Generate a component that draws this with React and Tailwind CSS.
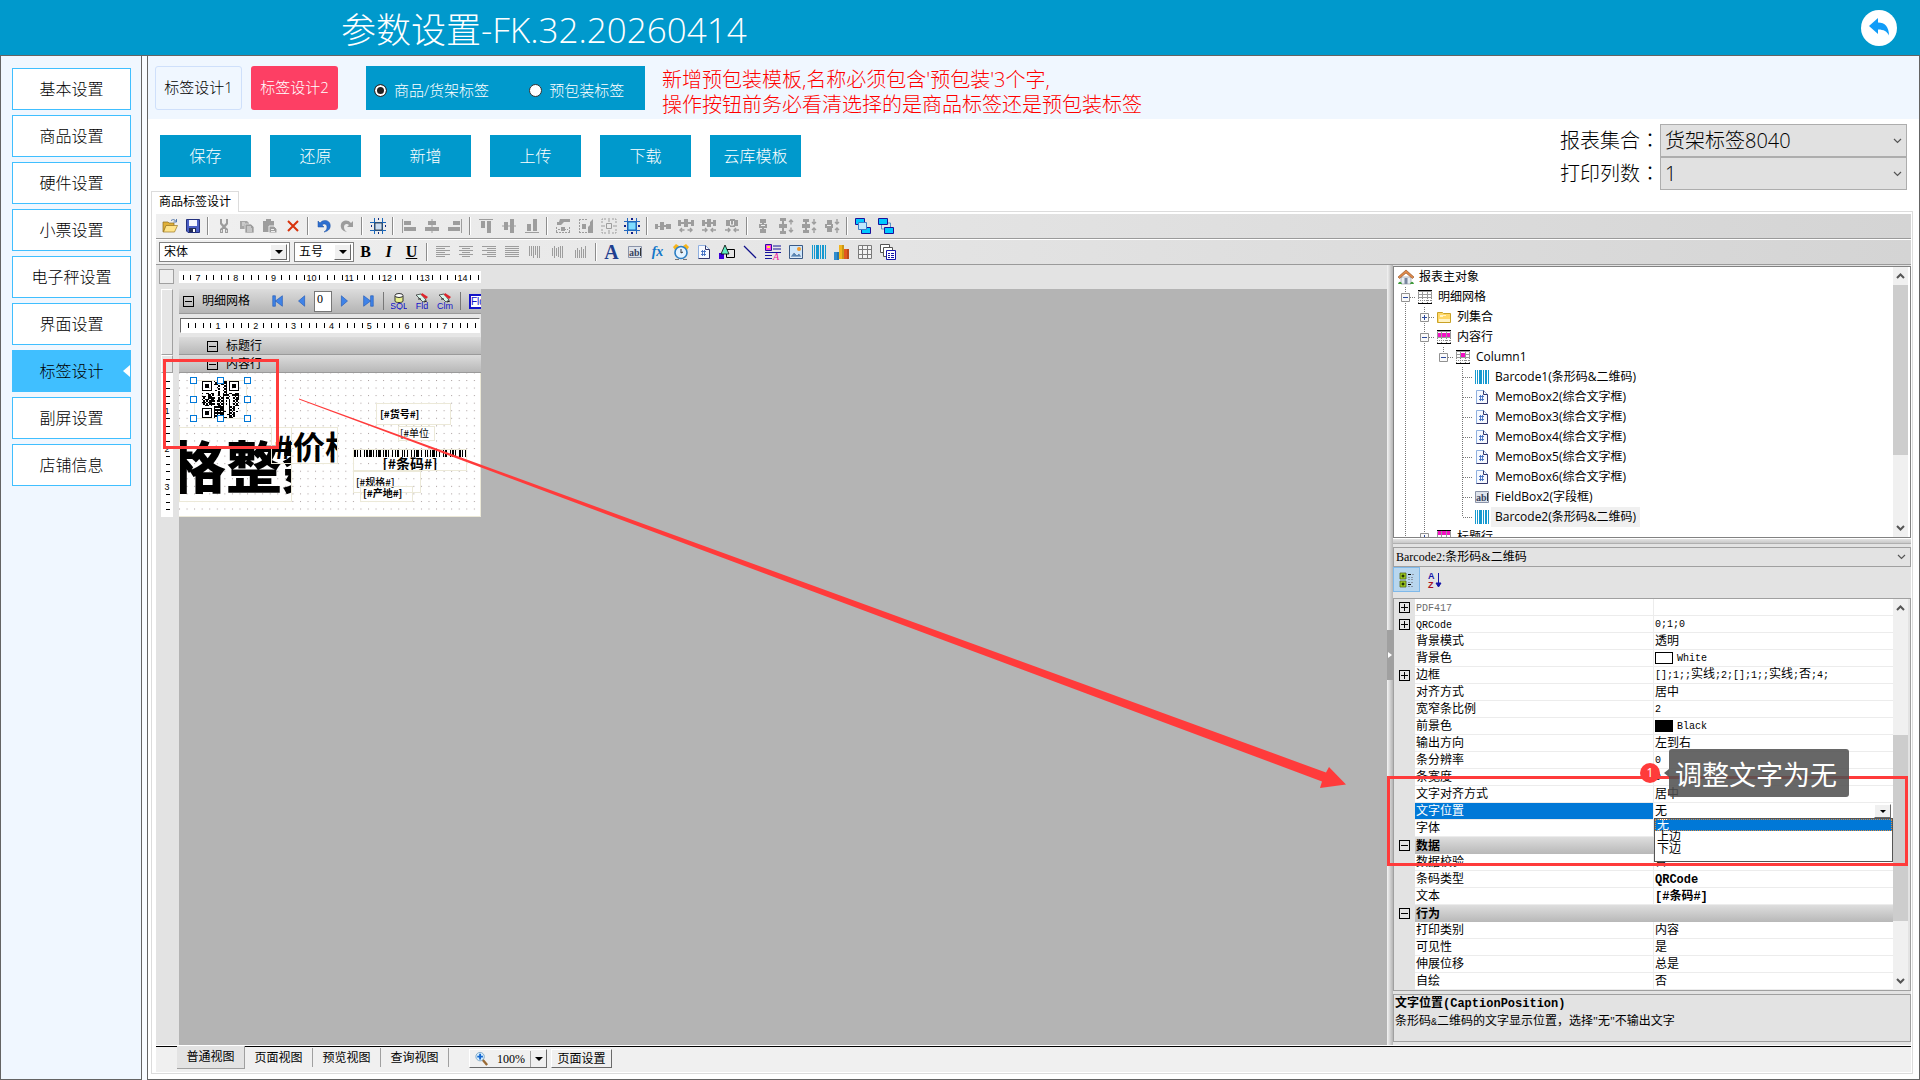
import clsx from "clsx";

const GRAY = "#9d9d9d";

/* ---------- data ---------- */

const menu = ["基本设置", "商品设置", "硬件设置", "小票设置", "电子秤设置", "界面设置", "标签设计", "副屏设置", "店铺信息"];
const actions = ["保存", "还原", "新增", "上传", "下载", "云库模板"];

const toolbarTop = [
  ["open", "save"],
  ["cut", "copy", "paste", "remove"],
  ["undo", "redo"],
  ["frame"],
  ["alignLeft", "alignCenter", "alignRight"],
  ["alignTop", "alignMiddle", "alignBottom"],
  ["sameWidth", "sameHeight", "sameSize", "fitGrid"],
  ["hEqual", "hMore", "hLess", "hNone"],
  ["vEqual", "vMore", "vLess", "vNone"],
  ["front", "back"]
];

const toolbarText = [
  ["bold", "italic", "underline"],
  ["textLeft", "textCenter", "textRight", "textJustify", "vTop", "vMiddle", "vBottom"],
  ["label", "field", "fx", "clock", "memo", "shape", "line", "rich", "picture", "barcode", "chart", "table", "sub"]
];

const tree = [
  { cells: [], icon: "home", text: "报表主对象" },
  { cells: ["minus"], icon: "grid", text: "明细网格" },
  { cells: ["v", "plus"], icon: "folder", text: "列集合" },
  { cells: ["v", "minus"], icon: "gridRow", text: "内容行" },
  { cells: ["v", "v", "minusLast"], icon: "gridCell", text: "Column1" },
  { cells: ["v", "v", "none", "tee"], icon: "barcode", text: "Barcode1(条形码&二维码)" },
  { cells: ["v", "v", "none", "tee"], icon: "memo", text: "MemoBox2(综合文字框)" },
  { cells: ["v", "v", "none", "tee"], icon: "memo", text: "MemoBox3(综合文字框)" },
  { cells: ["v", "v", "none", "tee"], icon: "memo", text: "MemoBox4(综合文字框)" },
  { cells: ["v", "v", "none", "tee"], icon: "memo", text: "MemoBox5(综合文字框)" },
  { cells: ["v", "v", "none", "tee"], icon: "memo", text: "MemoBox6(综合文字框)" },
  { cells: ["v", "v", "none", "tee"], icon: "field", text: "FieldBox2(字段框)" },
  { cells: ["v", "v", "none", "ell"], icon: "barcode", text: "Barcode2(条形码&二维码)", active: true },
  { cells: ["v", "plus"], icon: "gridHead", text: "标题行" }
];

const properties = [
  { name: "PDF417", value: "", expand: true, muted: true },
  { name: "QRCode", value: "0;1;0", expand: true },
  { name: "背景模式", value: "透明" },
  { name: "背景色", value: "White", swatch: "bg-white" },
  { name: "边框", value: "[];1;;实线;2;[];1;;实线;否;4;", expand: true },
  { name: "对齐方式", value: "居中" },
  { name: "宽窄条比例", value: "2" },
  { name: "前景色", value: "Black", swatch: "bg-black" },
  { name: "输出方向", value: "左到右" },
  { name: "条分辨率", value: "0" },
  { name: "条宽度", value: "0" },
  { name: "文字对齐方式", value: "居中" },
  { name: "文字位置", value: "无", options: ["无", "上边", "下边"] },
  { name: "字体", value: "" },
  { group: "数据" },
  { name: "数据校验", value: "否" },
  { name: "条码类型", value: "QRCode", strong: true },
  { name: "文本", value: "[#条码#]", strong: true },
  { group: "行为" },
  { name: "打印类别", value: "内容" },
  { name: "可见性", value: "是" },
  { name: "伸展位移", value: "总是" },
  { name: "自绘", value: "否" }
];

/* ---------- icons ---------- */

const textLines = (rows) => rows.map(([x, w], i) => <rect key={i} x={x} y={2 + i * 2} width={w} height="1" fill={GRAY} />);
const bars = (rows) => rows.map(([y, h], i) => <rect key={i} x={2 + i * 2} y={y} width="1" height={h} fill={GRAY} />);

const gridBase = (
  <>
    <path d="M1 1h14v14H1z" fill="#fff" />
    <path d="M1.500 8V2.500h13V8M1.500 5.500h13M5.500 2v6M10.500 2v6M1 8.500h14" stroke="#9a9a9a" fill="none" />
    <path d="M1 1.500h14M1 14.500h14" stroke="#000" />
    <path d="M1.500 9v5M14.500 9v5M5.500 9v5M10.500 9v5M1 11.500h14" stroke="#888" strokeDasharray="1 1" fill="none" />
  </>
);

const arrowsH = (inward) =>
  inward ? <path d="M1 12h5M10 12h5M4 10l2 2-2 2M12 10l-2 2 2 2" stroke={GRAY} fill="none" strokeWidth="1.4" />
    : <path d="M1.500 12h5M9.500 12h5M4 10l-2 2 2 2M12 10l2 2-2 2" stroke={GRAY} fill="none" strokeWidth="1.4" />;

const arrowsV = (inward) =>
  inward ? <path d="M13 1v5M13 10v5M11 4l2 2 2-2M11 12l2-2 2 2" stroke={GRAY} fill="none" strokeWidth="1.4" />
    : <path d="M13 1.500v5M13 9.500v5M11 4l2-2 2 2M11 12l2 2 2-2" stroke={GRAY} fill="none" strokeWidth="1.4" />;

const icons = {
  open: (
    <>
      <path d="M1 4h5l1 1h5v3H4l-2.500 6H1z" fill="#e0b038" stroke="#8a6a1c" strokeWidth=".7" />
      <path d="M4 7.500h11.500L12.500 14H1.500z" fill="#ffe48a" stroke="#9a7620" strokeWidth=".7" />
      <path d="M9 2.500c2-1.500 4-1 5 1M14.500 1v3h-3" fill="none" stroke="#5577aa" />
    </>
  ),
  save: (
    <>
      <path d="M1.500 1.500h13v13H3l-1.500-1.500z" fill="#4b5fc4" stroke="#23307e" />
      <path d="M4 2h8v6H4z" fill="#f4f6ff" />
      <path d="M4 10h7v4H4z" fill="#222b55" />
      <path d="M8 11h2v3H8z" fill="#fff" />
    </>
  ),
  cut: (
    <>
      <path d="M4 1h2v4l2 2 2-2V1h2v5l-2.500 3L12 11v4H9v-4H7v4H4v-4l2.500-2L4 6z" fill={GRAY} />
      <path d="M5.500 12v2M10.500 12v2" stroke="#ededed" strokeWidth=".8" />
    </>
  ),
  copy: (
    <>
      <path d="M1 3h7l2 2v6H1z" fill="#a6a6a6" />
      <path d="M6 6h6l3 3v6H6z" fill={GRAY} stroke="#ededed" strokeWidth=".7" />
      <path d="M8 9h4M8 11h5M8 13h5M3 5h3M3 7h2" stroke="#ededed" />
    </>
  ),
  paste: (
    <>
      <path d="M1 3h3V1h5v2h3v11H1z" fill={GRAY} />
      <path d="M7 8h5l3 3v4H7z" fill={GRAY} stroke="#ededed" />
      <path d="M9 11.500h3M9 13.500h4" stroke="#ededed" />
    </>
  ),
  remove: <path d="M3 3l10 10M13 3L3 13" stroke="#d8330c" strokeWidth="2" />,
  undo: <path d="M2 3v6h6L6 7c2-2 5-1 5 2 0 2-1 4-3 5 5-1 7-4 6-8C13 2 7 1 4 5z" fill="#2e6fd0" stroke="#1a4fa0" strokeWidth=".5" />,
  redo: <path d="M14 3v6H8l2-2C8 5 5 6 5 9c0 2 1 4 3 5C3 13 1 10 2 6c1-4 7-5 10-1z" fill={GRAY} />,
  frame: (
    <>
      <path d="M4.500 0v16M12.500 0v16M0 4.500h16M0 12.500h16" stroke="#1b66b8" />
      <path d="M5 5h7v7H5z" fill="#c9dcf2" stroke="#333" strokeWidth=".8" />
      <path d="M8 1h1M8 15h1M1 8h1M15 8h1" stroke="#112a80" strokeWidth="2" />
    </>
  ),
  alignLeft: <path d="M1 1h1v14H1zM3 3h7v4H3zM3 9h12v4H3z" fill={GRAY} />,
  alignCenter: <path d="M7.500 1h1v14h-1zM4 3h8v4H4zM1 9h14v4H1z" fill={GRAY} />,
  alignRight: <path d="M14 1h1v14h-1zM6 3h7v4H6zM1 9h12v4H1z" fill={GRAY} />,
  alignTop: <path d="M1 1h14v1H1zM3 3h4v7H3zM9 3h4v12H9z" fill={GRAY} />,
  alignMiddle: <path d="M1 7.500h14v1H1zM3 4h4v8H3zM9 1h4v14H9z" fill={GRAY} />,
  alignBottom: <path d="M1 14h14v1H1zM3 6h4v7H3zM9 1h4v12H9z" fill={GRAY} />,
  sameWidth: (
    <>
      <path d="M5 1h10v3H9L6 7H2V4h2zM6 9h4v4H6z" fill={GRAY} />
      <path d="M1.500 9v6M14.500 9v6M1 14.500h14M3 11.500h10" stroke={GRAY} strokeDasharray="2 1" />
    </>
  ),
  sameHeight: (
    <>
      <path d="M15 1v14h-5V9l2-2V4zM4 6h4v5H4z" fill={GRAY} />
      <path d="M1 1.500h8M1 14.500h8M1.500 1v14" stroke={GRAY} strokeDasharray="2 1" />
    </>
  ),
  sameSize: (
    <>
      <path d="M1 5V1h4M11 1h4v4M15 11v4h-4M5 15H1v-4" stroke={GRAY} fill="none" strokeDasharray="2 1" />
      <path d="M5.500 5.500h5v5h-5zM8 0v4M8 12v4M0 8h4M12 8h4" stroke={GRAY} fill="none" />
    </>
  ),
  fitGrid: (
    <>
      <path d="M3.500 0v16M12.500 0v16M0 3.500h16M0 12.500h16" stroke="#2468c0" />
      <path d="M4 4h8v8H4z" fill="#7fdcff" stroke="#1b66b8" />
      <path d="M7 0h2v2H7zM7 14h2v2H7zM0 7h2v2H0zM14 7h2v2h-2z" fill="#10208a" />
    </>
  ),
  hEqual: <path d="M0 6h3v2h2V4h4v3h2V6h5v5h-5V9H9v3H5V9H3v2H0z" fill={GRAY} />,
  hMore: <><path d="M0 2h3v2h3V1h4v3h3V2h3v6h-3V6h-3v3H6V6H3v2H0z" fill={GRAY} />{arrowsH(false)}</>,
  hLess: <><path d="M1 2h3v2h2V1h4v3h2V2h3v6h-3V6h-2v3H6V6H4v2H1z" fill={GRAY} />{arrowsH(true)}</>,
  hNone: <><path d="M2 2h4V1h5v1h3v6h-3v1H6V8H2z" fill={GRAY} /><path d="M6.500 3v4h3V3" stroke="#eee" fill="none" />{arrowsH(true)}</>,
  vEqual: <><path d="M5 1h6v4H9v1h3v4H9v1h2v4H5v-4h2v-1H4V6h3V5H5z" fill={GRAY} /><path d="M6 7.500h4" stroke="#eee" /></>,
  vMore: <><path d="M2 0h6v3H6v3h3v4H6v3h2v3H2v-3h2v-3H1V6h3V3H2z" fill={GRAY} />{arrowsV(false)}</>,
  vLess: <><path d="M2 1h6v3H6v2h3v4H6v2h2v3H2v-3h2v-2H1V6h3V4H2z" fill={GRAY} />{arrowsV(true)}</>,
  vNone: <><path d="M3 2h5v4h1v4H8v4H3v-4H1V6h2z" fill={GRAY} /><path d="M3 7.500h4" stroke="#eee" />{arrowsV(true)}</>,
  front: (
    <>
      <path d="M.5.5h9v6h-9zM6.500 9.500h9v6h-9z" fill="#00c8ff" stroke="#1c109a" />
      <path d="M3.500 4.500h8v7h-8z" fill="#bfe8ff" stroke="#3f7fc8" />
    </>
  ),
  back: (
    <>
      <path d="M9 5h3.500v5M3.500 7v4H7" fill="none" stroke="#5b93c8" />
      <path d="M.5.5h9v6h-9zM6.500 9.500h9v6h-9z" fill="#00c8ff" stroke="#1c109a" />
    </>
  ),
  textLeft: textLines([[1, 14], [1, 9], [1, 14], [1, 9], [1, 14], [1, 9]]),
  textCenter: textLines([[1, 14], [4, 8], [1, 14], [4, 8], [1, 14], [4, 8]]),
  textRight: textLines([[1, 14], [6, 9], [1, 14], [6, 9], [1, 14], [6, 9]]),
  textJustify: textLines([[1, 14], [1, 14], [1, 14], [1, 14], [1, 14], [1, 14]]),
  vTop: bars([[2, 10], [2, 10], [2, 12], [2, 9], [2, 12], [2, 12]]),
  vMiddle: bars([[4, 8], [2, 12], [4, 8], [3, 10], [2, 12], [2, 12]]),
  vBottom: bars([[6, 8], [4, 10], [6, 8], [3, 11], [5, 9], [2, 12]]),
  field: (
    <>
      <path d="M1.500 2.500h13v11h-13z" fill="#dfe4ec" stroke="#8a93a8" />
      <text x="2" y="12" fontSize="10" fontWeight="bold" fontFamily="Liberation Serif, serif" fill="#3a4660">ab</text>
      <path d="M13.500 4v8" stroke="#333" />
    </>
  ),
  clock: (
    <>
      <path d="M0 3l3-3 3 2-4 4zM16 3l-3-3-3 2 4 4z" fill="#f7b519" />
      <circle cx="8" cy="8.500" r="6" fill="#e4f3ff" stroke="#2c7fc4" strokeWidth="1.600" />
      <path d="M8 5v4l2-1" stroke="#333" fill="none" />
      <path d="M2 15.500h4M10 15.500h4" stroke="#777" />
    </>
  ),
  memo: (
    <>
      <path d="M2.500 1.500h7l4 4v9h-11z" fill="#f6f9ff" stroke="#8fb0e0" />
      <path d="M9.500 1.500v4h4v9h-11" fill="none" stroke="#33366a" />
      <path d="M5 7.500h5M5 10.500h5M6.500 6v6M8.500 6v6" stroke="#3f6cc0" strokeWidth=".9" />
    </>
  ),
  shape: (
    <>
      <path d="M7.500 5.500h8v8h-8z" fill="none" stroke="#000" />
      <path d="M0 9h5v6H0z" fill="#3b00d8" />
      <path d="M6 1l4 9H2z" fill="#63f0c4" stroke="#000" strokeWidth=".8" />
    </>
  ),
  line: <path d="M2 2l12 12" stroke="#10108a" strokeWidth="1.300" />,
  rich: (
    <>
      <path d="M.5.500h6v6h-6z" fill="#ff3ce0" stroke="#2c10a0" />
      <path d="M2 2h3v2H2z" fill="#ffe53a" />
      <path d="M8 2h8M8 5h8M0 8.500h16M0 11.500h7M0 14.500h7" stroke="#14149a" strokeWidth="1.200" />
      <text x="8" y="16" fontSize="10" fontStyle="italic" fontFamily="Liberation Serif, serif" fill="#f0109a">A</text>
    </>
  ),
  picture: (
    <>
      <path d="M1.500 1.500h13v13h-13z" fill="#cfe6fa" stroke="#3a5a86" />
      <circle cx="11" cy="5" r="2" fill="#f39a28" />
      <path d="M2 13l4-5 3 3 2-2 3 4z" fill="#5a86b4" stroke="#fff" strokeWidth=".6" />
    </>
  ),
  barcode: <path d="M1 1h1v14H1zM3 1h1v14H3zM5 1h3v14H5zM9 1h1v14H9zM11 1h2v14h-2zM14 1h1v14h-1z" fill="#1598cf" />,
  chart: (
    <>
      <path d="M0 8h5v8H0z" fill="#2f8ed0" />
      <path d="M5 1h5v14H5z" fill="#f2b51c" />
      <path d="M10 5h5v10h-5z" fill="#e2571f" />
      <path d="M4 8v8M9 1v14M14 5v10" stroke="#00000055" />
    </>
  ),
  table: <path d="M1.500 1.500h13v13h-13zM1.500 5.500h13M1.500 10.500h13M5.500 1.500v13M10.500 1.500v13" fill="#f3f3f3" stroke="#7a7a7a" />,
  sub: (
    <>
      <path d="M.5.500h9v8h-9z" fill="#fff" stroke="#555" />
      <path d="M3.500 3.500h9v9h-9z" fill="#fff" stroke="#555" />
      <path d="M6.500 6.500h9v9h-9z" fill="#fff" stroke="#1414a8" />
      <path d="M8 9.500h2M11 9.500h3M8 11.500h2M11 11.500h3M8 13.500h2M11 13.500h3" stroke="#1414a8" />
    </>
  ),
  home: (
    <>
      <path d="M3 8h10v7H3z" fill="#e8eef4" stroke="#8a8f98" strokeWidth=".6" />
      <path d="M0 8l8-7 8 7-1.500 1.500L8 4 1.500 9.500z" fill="#e08a4a" stroke="#8a4c22" strokeWidth=".6" />
      <path d="M6.500 9h3v6h-3z" fill="#7a86a0" />
      <path d="M0 15c1-3 3-3 4 0M12 15c1-3 3-3 4 0" fill="#3f9a3a" />
    </>
  ),
  folder: (
    <>
      <path d="M1.500 3.500h5l1 1h7v9h-13z" fill="#ffd766" stroke="#c9a227" />
      <path d="M4 6h6v1H7v1H4zM3 10h11v3H3z" fill="#fff3c4" />
    </>
  ),
  grid: gridBase,
  gridRow: <>{gridBase}<path d="M2 4h3v4H2zM6 4h4v4H6zM11 4h3v4h-3z" fill="#f410c4" /></>,
  gridCell: <>{gridBase}<path d="M6 4h4v4H6z" fill="#f410c4" /></>,
  gridHead: <>{gridBase}<path d="M2 2h3v4H2zM6 2h4v4H6zM11 2h3v4h-3z" fill="#f410c4" /></>,
  first: <path d="M2 2h3v12H2zM13 2v12L5 8z" fill="#3f83e8" stroke="#1d56b4" strokeWidth=".7" />,
  prev: <path d="M11 2v12L4 8z" fill="#3f83e8" stroke="#1d56b4" strokeWidth=".7" />,
  next: <path d="M5 2v12l7-6z" fill="#3f83e8" stroke="#1d56b4" strokeWidth=".7" />,
  last: <path d="M11 2h3v12h-3zM3 2v12l8-6z" fill="#3f83e8" stroke="#1d56b4" strokeWidth=".7" />,
  zoom: (
    <>
      <path d="M9 9l5 6" stroke="#9a6a34" strokeWidth="2.500" />
      <circle cx="6.500" cy="6" r="4.500" fill="#d8efff" stroke="#7fa6c4" />
      <path d="M6.500 3v6M3.500 6h6" stroke="#1468d0" strokeWidth="2" />
    </>
  ),
  category: (
    <>
      <path d="M1 1h6v6H1zM1 9h6v6H1z" fill="#9ccc1c" stroke="#55661a" strokeWidth=".8" />
      <path d="M2.500 4h3M4 2.500v3M2.500 12h3M4 10.500v3" stroke="#000" />
      <path d="M9 2.500h3M9 12.500h3" stroke="#000" />
      <path d="M9 5.500h6M9 7.500h6M13 2.500h2M9 10.500h6M9 14.500h6" stroke="#8d98a8" strokeDasharray="2 1" />
    </>
  ),
  sort: (
    <>
      <text x="2" y="7" fontSize="9" fontWeight="bold" fontFamily="Liberation Sans, sans-serif" fill="#1414a8">A</text>
      <text x="2" y="16" fontSize="9" fontWeight="bold" fontFamily="Liberation Sans, sans-serif" fill="#a81424">Z</text>
      <path d="M12.500 1v13M10 11l2.500 4 2.500-4z" stroke="#1414a8" fill="#1414a8" />
    </>
  )
};

function Icon({ name, size = 16 }) {
  return (
    <svg width={size} height={size} viewBox="0 0 16 16" className="shrink-0" aria-hidden="true">
      {icons[name]}
    </svg>
  );
}

const dbTools = { sql: "SQL", fld: "Fld", clm: "Clm" };

function DbIcon({ name }) {
  return (
    <svg width="16" height="18" viewBox="0 0 16 18" aria-hidden="true">
      {name === "sql" ? (
        <>
          <path d="M4 4v5c0 2 8 2 8 0V4" fill="#e8f08a" stroke="#333" />
          <ellipse cx="8" cy="3.500" rx="4" ry="2" fill="#fff" stroke="#333" />
        </>
      ) : (
        <>
          <path d="M2 3l5-1 5 6-3 2z" fill="#d7f5ea" stroke="#222" strokeWidth=".7" />
          <path d="M8 1l6 4-2 2-5-4z" fill="#e0242c" />
          <path d="M4 7h3M10 10l3-1" stroke="#222" />
        </>
      )}
      <text x="8" y="17" textAnchor="middle" fontSize="9" fontFamily="Liberation Sans, sans-serif" fill="#1414c8">
        {dbTools[name]}
      </text>
    </svg>
  );
}

/* ---------- small pieces ---------- */

const glyphs = { bold: "B", italic: "I", underline: "U", label: "A", fx: "fx" };
const glyphStyles = {
  bold: "text-base font-black text-black",
  italic: "text-base font-bold italic text-black",
  underline: "text-base font-bold text-black underline",
  label: "text-xl font-black text-[#1f3f8f]",
  fx: "text-sm font-bold italic text-[#1478c8]"
};

function ToolGroups({ groups }) {
  return groups.map((group, index) => (
    <div key={group[0]} className="flex items-center">
      {index > 0 ? <span className="mx-[3px] h-[18px] w-[2px] border-l border-[#8c8c8c] bg-white" /> : null}
      {group.map((name) => (
        <button key={name} type="button" aria-label={name} className="flex h-6 w-[23px] items-center justify-center">
          {glyphs[name] ? (
            <span className={clsx("[font-family:'Liberation_Serif',serif] leading-5", glyphStyles[name])}>{glyphs[name]}</span>
          ) : (
            <Icon name={name} />
          )}
        </button>
      ))}
    </div>
  ));
}

function ClassicSelect({ label, value, className }) {
  return (
    <span className={clsx("relative flex h-5 border border-[#828282] bg-white", className)}>
      <select aria-label={label} defaultValue={value} className="w-full appearance-none bg-transparent pl-1 text-xs leading-4 outline-none">
        <option>{value}</option>
      </select>
      <span className="pointer-events-none absolute right-0.5 top-px flex h-4 w-[17px] items-center justify-center border border-r-[#6a6a6a] border-b-[#6a6a6a] border-l-white border-t-white bg-[#f0f0f0]">
        <span className="border-x-4 border-t-4 border-x-transparent border-t-black" />
      </span>
    </span>
  );
}

function Chevron({ up, className }) {
  return (
    <svg width="9" height="6" viewBox="0 0 9 6" className={className} aria-hidden="true">
      <path d={up ? "M1 5l3.500-3.500L8 5" : "M1 1l3.500 3.500L8 1"} fill="none" stroke="#555" strokeWidth={up === undefined ? 1.2 : 2} />
    </svg>
  );
}

function ScrollBar({ thumb }) {
  return (
    <div className="relative mr-0.5 flex w-[15px] shrink-0 flex-col items-center justify-between bg-[#f0f0f0] py-1.5">
      <Chevron up />
      <span className={clsx("absolute inset-x-0 bg-[#cdcdcd]", thumb)} />
      <Chevron up={false} />
    </div>
  );
}

function Toggle({ plus }) {
  return (
    <span className="relative block h-[11px] w-[11px] shrink-0 border border-black">
      <span className="absolute inset-x-px top-1 h-px bg-black" />
      {plus ? <span className="absolute inset-y-px left-1 w-px bg-black" /> : null}
    </span>
  );
}

// Latin runs are fixed width, about half a Chinese character; bold ones are a pixel wider.
function HalfWidth({ text, strong }) {
  return text.split(/([\x20-\x7e]+)/).map((part, i) =>
    i % 2 === 1 ? (
      <span key={i} className={clsx("[font-family:'Liberation_Mono',monospace]", strong ? "text-xs leading-4" : "text-[10px]")}>{part}</span>
    ) : part
  );
}

function TreeCell({ type }) {
  const box = type.startsWith("minus") || type === "plus";
  const bottom = type === "ell" || type === "minusLast" ? 10 : 20;
  return (
    <svg width="19" height="20" viewBox="0 0 19 20" className="shrink-0" aria-hidden="true">
      {type !== "none" ? <path d={`M9.500 0V${bottom}`} stroke="#777" strokeDasharray="1 1" /> : null}
      {type !== "none" && type !== "v" ? <path d="M10 10.500h9" stroke="#777" strokeDasharray="1 1" /> : null}
      {box ? <path d="M5.500 6.500h8v8h-8z" fill="#fafafa" stroke="#919191" /> : null}
      {box ? <path d="M7 10.500h5" stroke="#2c4a9a" /> : null}
      {type === "plus" ? <path d="M9.500 8v5" stroke="#2c4a9a" /> : null}
    </svg>
  );
}

function Ruler({ from, count, start, width = 302 }) {
  const step = 37.8;
  const items = [];
  for (let i = 0; i < count; i += 1) {
    const x = start + i * step;
    items.push(<text key={`n${i}`} x={x} y="9.500" textAnchor="middle" fontSize="9">{from + i}</text>);
  }
  for (let i = -5; i < count * 5; i += 1) {
    const x = Math.round(start + (i * step) / 5);
    if (i % 5 !== 0 && x > 3 && x < width - 2) {
      items.push(<rect key={`t${i}`} x={x} y="4" width="1" height="5" />);
    }
  }
  return (
    <svg width={width} height="12" className="block" fontFamily="Liberation Sans, sans-serif" aria-hidden="true">
      {items}
    </svg>
  );
}

function SideRuler() {
  const ticks = [];
  for (let i = 1; i < 19; i += 1) {
    if (i % 5 !== 0) ticks.push(<rect key={i} x="5" y={Math.round(i * 7.56)} width="4" height="1" />);
  }
  return (
    <svg width="12" height="144" className="block bg-white" fontFamily="Liberation Sans, sans-serif" fontSize="9" aria-hidden="true">
      {ticks}
      {[1, 2, 3].map((n) => (
        <text key={n} x="6" y={n * 38 + 3} textAnchor="middle">{n}</text>
      ))}
    </svg>
  );
}

function QrCode() {
  const n = 25;
  const cells = [];
  const finder = (x, y) => x >= 0 && y >= 0 && x < 7 && y < 7 && (x === 0 || y === 0 || x === 6 || y === 6 || (x > 1 && x < 5 && y > 1 && y < 5));
  const quiet = (x, y) => (x < 8 && y < 8) || (x > n - 9 && y < 8) || (x < 8 && y > n - 9);
  for (let y = 0; y < n; y += 1) {
    for (let x = 0; x < n; x += 1) {
      const on = quiet(x, y)
        ? finder(x, y) || finder(x - n + 7, y) || finder(x, y - n + 7)
        : (x * 7 + y * 13 + x * y * 5 + ((x * x + y * 3) % 7)) % 5 < 3 && (x * y + x) % 4 !== 1;
      if (on) cells.push(<rect key={`${x}-${y}`} x={x} y={y} width="1" height="1" />);
    }
  }
  return (
    <svg width="37" height="37" viewBox="0 0 25 25" shapeRendering="crispEdges" aria-label="二维码">
      {cells}
    </svg>
  );
}

function LinearCode() {
  const pattern = "2112131121311211321121131211231112131211321311121131121311231121132112131121";
  let x = 0;
  return (
    <svg width="114" height="7" viewBox="0 0 114 7" shapeRendering="crispEdges" aria-label="条形码">
      {pattern.split("").map((digit, i) => {
        const left = x;
        x += Number(digit);
        return i % 2 === 0 ? <rect key={i} x={left} y="0" width={digit} height="7" /> : null;
      })}
    </svg>
  );
}

/* ---------- report canvas ---------- */

const boxClass = "absolute overflow-hidden whitespace-nowrap border border-[#ece9d8] text-black";
const handles = [
  "left-[11px] top-[4px]", "left-[38px] top-[4px]", "left-[65px] top-[4px]",
  "left-[11px] top-[23px]", "left-[65px] top-[23px]",
  "left-[11px] top-[42px]", "left-[38px] top-[42px]", "left-[65px] top-[42px]"
];

function Label() {
  return (
    <div className="relative h-[144px] border-b border-r border-[#ece9d8] bg-white [font-family:'Noto_Sans_CJK_SC',sans-serif]">
      <svg className="absolute inset-0 h-full w-full" aria-hidden="true">
        <defs>
          <pattern id="dots" width="7.56" height="7.56" x="7.56" y="7" patternUnits="userSpaceOnUse">
            <rect width="1" height="1" fill="#a89c9c" />
          </pattern>
        </defs>
        <rect width="100%" height="100%" fill="url(#dots)" />
      </svg>
      <div className={clsx(boxClass, "left-0 top-[54px] h-[75px] w-[113px] -indent-[10px] text-[56px] font-black leading-[72px]")}>格整数</div>
      <div className={clsx(boxClass, "left-[92px] top-[54px] h-[37px] w-[67px] pl-0.5 text-[32px] font-bold leading-[34px]")}>#价格</div>
      <div className={clsx(boxClass, "left-[197px] top-[30px] h-[22px] w-[75px] pl-[3px] text-[10px] font-bold leading-5")}>[#货号#]</div>
      <div className={clsx(boxClass, "left-[219px] top-[53px] h-[15px] w-[37px] pl-px text-[10px] leading-[11px]")}>[#单位</div>
      <div className={clsx(boxClass, "left-[174px] top-[76px] h-[22px] w-[114px] text-center text-sm font-bold leading-[13px]")}>
        <LinearCode />
        <p>[#条码#]</p>
      </div>
      <div className={clsx(boxClass, "left-[174px] top-[98px] h-[22px] w-[68px] pl-0.5 text-[10px] font-medium leading-5")}>[#规格#]</div>
      <div className={clsx(boxClass, "left-[181px] top-[113px] h-[16px] w-[53px] pl-0.5 text-[10px] font-bold leading-3")}>[#产地#]</div>
      <div className={clsx(boxClass, "left-[15px] top-[7px] flex h-[39px] w-[53px] justify-center")}>
        <QrCode />
      </div>
      {handles.map((place) => (
        <span key={place} className={clsx("absolute h-[7px] w-[7px] border border-[#0078d7] bg-white", place)} />
      ))}
    </div>
  );
}

function Band({ title }) {
  return (
    <div className="flex h-[18px] items-center gap-2 border-b border-[#9a9a9a] bg-linear-to-b from-[#dcdcdc] to-[#b8b8b8] pl-7 pt-px text-xs leading-4">
      <Toggle />
      {title}
    </div>
  );
}

function NavButton({ name }) {
  return (
    <button type="button" aria-label={name} className="flex h-5 w-6 shrink-0 items-center justify-center">
      <Icon name={name} size={14} />
    </button>
  );
}

function Report() {
  return (
    <div className="w-[302px] bg-[#e6e6e6]">
      <div className="flex h-[25px] items-center overflow-hidden border-b border-[#9a9a9a] bg-linear-to-b from-[#dcdcdc] to-[#b4b4b4] pl-1 text-xs leading-4">
        <Toggle />
        <span className="ml-2 mr-4 shrink-0">明细网格</span>
        <NavButton name="first" />
        <NavButton name="prev" />
        <input aria-label="记录" defaultValue="0" className="h-[21px] w-[18px] shrink-0 border border-[#777] bg-white pb-1 pl-0.5 outline-none" />
        <NavButton name="next" />
        <NavButton name="last" />
        <span className="mx-[3px] h-[18px] w-px shrink-0 bg-[#777]" />
        {Object.keys(dbTools).map((name) => (
          <button key={name} type="button" aria-label={name} className="flex w-[23px] shrink-0 justify-center">
            <DbIcon name={name} />
          </button>
        ))}
        <span className="ml-1 mr-2 h-[18px] w-px shrink-0 bg-[#777]" />
        <span className="h-[15px] w-[18px] shrink-0 border-2 border-[#1414c8] bg-white text-[10px] leading-3 text-[#1414c8] [font-family:'Liberation_Sans',sans-serif]">Fld</span>
      </div>
      <div className="h-[23px] pl-px pt-1">
        <div className="h-[15px] w-[300px] border border-white border-l-[#6a6a6a] border-t-[#6a6a6a] bg-white">
          <Ruler from={1} count={7} start={37} width={298} />
        </div>
      </div>
      <Band title="标题行" />
      <Band title="内容行" />
      <Label />
    </div>
  );
}

/* ---------- right column ---------- */

function ObjectTree() {
  return (
    <div className="mt-px flex h-[272px] border border-[#828282] bg-white">
      <ul className="grow overflow-hidden pl-0.5 text-xs leading-5 [font-family:'Open_Sans','Noto_Sans_CJK_SC',sans-serif]">
        {tree.map((row) => (
          <li key={row.text} className="flex h-5 items-center">
            {row.cells.map((cell, i) => (
              <TreeCell key={i} type={cell} />
            ))}
            <span className="flex w-[19px] justify-center">
              <Icon name={row.icon} />
            </span>
            <span className={clsx("px-1 leading-5", row.active && "bg-[#f0f0f0]")}>{row.text}</span>
          </li>
        ))}
      </ul>
      <ScrollBar thumb="top-[18px] h-[170px]" />
    </div>
  );
}

function PropertyValue({ row }) {
  if (row.options) {
    return (
      <div className="relative">
        <select aria-label={row.name} defaultValue={row.value} className="block h-4 w-full appearance-none bg-transparent leading-4 outline-none">
          {row.options.map((option) => (
            <option key={option}>{option}</option>
          ))}
        </select>
        <span className="pointer-events-none absolute right-0.5 top-px flex h-[14px] w-[17px] items-center justify-center border border-white border-b-[#6a6a6a] border-r-[#6a6a6a] bg-[#f0f0f0]">
          <span className="border-x-[3px] border-t-[3px] border-x-transparent border-t-black" />
        </span>
        <ul role="listbox" aria-label={row.name} className="absolute -left-px right-0 top-[15px] z-10 h-11 border border-[#555] bg-white">
          {row.options.map((option, i) => (
            <li
              key={option}
              role="option"
              aria-selected={i === 0}
              className={clsx("h-3 pl-0.5 leading-3", i === 0 && "bg-[#0078d7] text-white outline-1 -outline-offset-1 outline-dotted outline-[#e08a3a]")}
            >
              {option}
            </li>
          ))}
        </ul>
      </div>
    );
  }

  return (
    <span className={clsx("flex h-4 items-center gap-1 leading-4", row.strong && "font-bold")}>
      {row.swatch ? <span className={clsx("h-3 w-[18px] border border-black", row.swatch)} /> : null}
      <span><HalfWidth text={row.value} strong={row.strong} /></span>
    </span>
  );
}

function PropertyGrid() {
  return (
    <div className="flex h-[393px] border border-[#a0a0a0]">
      <table className="grow table-fixed border-separate border-spacing-0 text-xs">
        <colgroup>
          <col className="w-[21px]" />
          <col className="w-[239px]" />
          <col />
        </colgroup>
        <tbody>
          {properties.map((row) =>
            row.group ? (
              <tr key={row.group} className="h-[17px]">
                <td className="bg-[#e3e3e3] p-0 pl-[5px]"><Toggle /></td>
                <th colSpan={2} className="bg-linear-to-b from-[#dedede] to-[#b8b8b8] p-0 pl-px text-left font-bold leading-4">{row.group}</th>
              </tr>
            ) : (
              <tr key={row.name} className="h-[17px]">
                <td className="bg-[#e3e3e3] p-0 pl-[5px]">{row.expand ? <Toggle plus /> : null}</td>
                <td
                  className={clsx(
                    "border-b border-r border-[#ececec] p-0 pl-px leading-4",
                    row.options ? "bg-[#0078d7] text-white" : "bg-white",
                    row.muted && "text-[#6d6d6d]"
                  )}
                >
                  <div className="h-4"><HalfWidth text={row.name} /></div>
                </td>
                <td className="border-b border-[#ececec] bg-white p-0 pl-px leading-4"><PropertyValue row={row} /></td>
              </tr>
            )
          )}
        </tbody>
      </table>
      <ScrollBar thumb="top-[136px] h-[186px]" />
    </div>
  );
}

function Inspector() {
  return (
    <aside className="flex w-[518px] shrink-0 flex-col bg-[#e3e3e3]">
      <ObjectTree />
      <div className="mb-[3px] h-1.5 border-y border-white border-b-[#b0b0b0] bg-linear-to-b from-[#e3e3e3] to-[#c8c8c8]" />
      <div className="relative flex h-5 items-center border border-[#a0a0a0]">
        <select aria-label="对象" className="w-full appearance-none bg-transparent pl-0.5 text-xs leading-4 outline-none">
          <option>Barcode2:条形码&amp;二维码</option>
        </select>
        <Chevron className="pointer-events-none absolute right-1" />
      </div>
      <div className="flex h-[31px]">
        <button type="button" aria-label="分类" className="flex h-[25px] w-[27px] items-center justify-center border border-[#7fb9ea] bg-[#b8d6ee]">
          <Icon name="category" />
        </button>
        <button type="button" aria-label="排序" className="flex h-[25px] w-[27px] items-center justify-center">
          <Icon name="sort" />
        </button>
      </div>
      <PropertyGrid />
      <div className="mt-[3px] h-12 border border-[#a0a0a0] pl-px text-xs">
        <p className="h-4 font-bold leading-4"><HalfWidth text="文字位置(CaptionPosition)" strong /></p>
        <p className="leading-5"><HalfWidth text="条形码&二维码的文字显示位置，选择" />"无"不输出文字</p>
      </div>
    </aside>
  );
}

/* ---------- designer ---------- */

function Designer() {
  return (
    <div className="flex grow flex-col text-black [font-family:'Liberation_Serif','Noto_Sans_CJK_SC',sans-serif]">
      <div className="flex h-[25px] items-center border-b border-[#9a9a9a] bg-linear-to-r from-[#f0f0f0] to-[#d4d4d4] pl-0.5">
        <ToolGroups groups={toolbarTop} />
      </div>
      <div className="mt-px flex h-[25px] items-center border-b border-[#9a9a9a] bg-linear-to-r from-[#f0f0f0] to-[#d4d4d4] pl-[3px]">
        <ClassicSelect label="字体" value="宋体" className="mr-1 w-[131px]" />
        <ClassicSelect label="字号" value="五号" className="w-[60px]" />
        <ToolGroups groups={toolbarText} />
      </div>
      <div className="flex grow">
        <section className="flex grow flex-col bg-[#e3e3e3]">
          <div className="flex h-6 items-start gap-[5px] pl-[3px] pt-1">
            <span className="h-[15px] w-[15px] border border-[#a0a0a0] bg-[#eee]" />
            <div className="mt-0.5 bg-white">
              <Ruler from={7} count={8} start={19} />
            </div>
          </div>
          <div className="flex grow">
            <div className="w-[23px] shrink-0 pl-[5px]">
              <div className="h-[66px] w-3 border border-white border-b-[#a0a0a0] border-r-[#a0a0a0] bg-[#e6e6e6]" />
              <div className="h-[18px] w-3 border border-white border-b-[#a0a0a0] border-r-[#a0a0a0] bg-[#e6e6e6]" />
              <SideRuler />
            </div>
            <div className="grow bg-[#b4b4b4]">
              <Report />
            </div>
          </div>
        </section>
        <div className="flex w-[6px] shrink-0 items-center bg-linear-to-r from-[#f4f4f4] to-[#b4b4b4]">
          <span className="flex h-[50px] w-full items-center justify-center bg-[#a0a0a0]">
            <span className="border-y-[3px] border-l-4 border-y-transparent border-l-white" />
          </span>
        </div>
        <Inspector />
      </div>
      <div className="mt-px flex h-[26px] items-start border-t border-black bg-[#f0f0f0] pl-[21px] text-xs leading-4">
        {["普通视图", "页面视图", "预览视图", "查询视图"].map((view, i) => (
          <button
            key={view}
            type="button"
            className={clsx("w-[68px]", i === 0 ? "-mt-px h-[23px] border-b border-r border-[#a0a0a0] bg-[#e3e3e3]" : "mt-px h-[19px] border-r border-[#a0a0a0]")}
          >
            {view}
          </button>
        ))}
        <div className="ml-5 mt-0.5 flex h-[19px] items-center border border-white border-b-[#6a6a6a] border-r-[#6a6a6a]">
          <label className="flex w-[60px] items-center gap-2 pl-1">
            <Icon name="zoom" size={15} />
            <span>100%</span>
          </label>
          <button type="button" aria-label="缩放" className="flex h-4 w-4 items-center justify-center border-l border-[#a0a0a0]">
            <span className="border-x-4 border-t-4 border-x-transparent border-t-black" />
          </button>
        </div>
        <button type="button" className="ml-1 mt-0.5 h-[19px] w-[61px] border border-white border-b-[#6a6a6a] border-r-[#6a6a6a]">
          页面设置
        </button>
      </div>
    </div>
  );
}

/* ---------- page ---------- */

function Sidebar() {
  return (
    <nav className="flex w-[142px] shrink-0 flex-col gap-[5px] border border-[#646464] border-t-0 bg-[#f0f7ff] pl-[11px] pt-3">
      {menu.map((item) => {
        const active = item === "标签设计";
        return (
          <button
            key={item}
            type="button"
            className={clsx("relative h-[42px] w-[119px] border border-[#40bfff] text-base font-light leading-6", active ? "bg-[#40bfff]" : "bg-white")}
          >
            {item}
            {active ? <span className="absolute right-0 top-3.5 border-y-[6px] border-r-[7px] border-y-transparent border-r-white" /> : null}
          </button>
        );
      })}
    </nav>
  );
}

function TopSelect({ id, label, value }) {
  return (
    <div className="flex h-[33px] items-center">
      <label htmlFor={id} className="w-[100px] text-xl leading-6">
        {label}
        <span className="[font-family:'Noto_Sans_CJK_TC',sans-serif]">：</span>
      </label>
      <div className="relative flex h-[33px] w-[247px] items-center border border-[#adadad] bg-[#e1e1e1]">
        <select id={id} defaultValue={value} className="h-full w-full appearance-none bg-transparent pl-1 text-xl outline-none">
          <option>{value}</option>
        </select>
        <Chevron className="pointer-events-none absolute right-1" />
      </div>
    </div>
  );
}

function Radio({ label, checked }) {
  return (
    <label className="flex items-center gap-[7px] text-[15px] text-white">
      <input
        type="radio"
        name="kind"
        defaultChecked={checked}
        className="h-[13px] w-[13px] appearance-none rounded-full border border-[#333] bg-white checked:bg-[#222] checked:shadow-[inset_0_0_0_2px_white]"
      />
      {label}
    </label>
  );
}

function Annotations() {
  return (
    <div className="pointer-events-none absolute inset-0 overflow-hidden">
      <span className="absolute left-[163px] top-[359px] h-[90px] w-[116px] border-[3px] border-[#ff3b3b]" />
      <span className="absolute left-[1387px] top-[776px] h-[90px] w-[521px] border-[3px] border-[#ff3b3b]" />
      <svg className="absolute inset-0 h-full w-full" aria-hidden="true">
        <path d="M299 398.500L1326 772.500L1329 767L1346 784.500L1320 788L1322 781.500L299 399.500z" fill="#ff3b3b" />
      </svg>
      <span className="absolute left-[1640px] top-[763px] flex h-5 w-5 items-center justify-center rounded-full bg-[#ff3b3b] text-xs text-white">1</span>
      <span className="absolute left-[1664px] top-[769px] border-y-4 border-r-[5px] border-y-transparent border-r-[#505050]/90" />
      <span className="absolute left-[1669px] top-[749px] flex h-12 w-[180px] items-center rounded-[3px] bg-[#505050]/87 pl-1.5 pt-1 text-[27px] leading-8 text-white">调整文字为无</span>
    </div>
  );
}

export default function App() {
  return (
    <div className="relative flex min-h-screen flex-col bg-[#f8fbff] text-black [font-family:'Open_Sans','Noto_Sans_CJK_SC',sans-serif]">
      <header className="flex h-14 items-center justify-between border-b border-[#646464] bg-[#0099cc] pl-[341px] pr-[23px] text-white">
        <h1 className="pt-1 text-[35px] font-light leading-10">参数设置-FK.32.20260414</h1>
        <button type="button" aria-label="返回" className="flex h-9 w-9 items-center justify-center rounded-full bg-white">
          <svg width="22" height="20" viewBox="0 0 22 20" aria-hidden="true">
            <path d="M1 8L10 0v4.500c7 0 11 4.500 11 13-2-4-5-6-11-6V16z" fill="#109cf8" />
          </svg>
        </button>
      </header>
      <div className="flex grow gap-[5px]">
        <Sidebar />
        <main className="flex min-w-0 grow flex-col border border-t-0 border-[#646464] bg-white">
          <div className="flex h-[63px] items-start bg-[#f0f7ff] pl-[7px] pt-2.5">
            <button type="button" className="mr-[9px] h-11 w-[87px] rounded-[3px] border border-[#cfe0fb] pb-0.5 text-[15px] font-light">标签设计1</button>
            <button type="button" className="mr-7 h-11 w-[87px] rounded-[3px] bg-[#fd3f64] pb-0.5 text-[15px] font-light text-white">标签设计2</button>
            <div className="mr-[17px] flex h-11 w-[279px] items-center gap-10 bg-[#0099cc] pl-2 pt-1 font-light">
              <Radio label="商品/货架标签" checked />
              <Radio label="预包装标签" />
            </div>
            <p className="pt-px text-xl font-light leading-[25px] text-[#ff0000]">
              新增预包装模板,名称必须包含'预包装'3个字,
              <br />
              操作按钮前务必看清选择的是商品标签还是预包装标签
            </p>
          </div>
          <div className="flex h-[72px] items-start justify-between pl-3 pr-3 font-light">
            <div className="flex gap-[19px] pt-4">
              {actions.map((action) => (
                <button key={action} type="button" className="h-[42px] w-[91px] bg-[#0099cc] text-base text-white">{action}</button>
              ))}
            </div>
            <div className="pt-[5px]">
              <TopSelect id="report-set" label="报表集合" value="货架标签8040" />
              <TopSelect id="columns" label="打印列数" value="1" />
            </div>
          </div>
          <div className="mb-[5px] ml-[3px] mr-[6px] flex grow flex-col">
            <button type="button" className="relative -mb-px h-[21px] w-[88px] border border-b-0 border-[#dcdcdc] bg-white text-xs leading-4">商品标签设计</button>
            <div className="flex grow flex-col border border-[#dcdcdc] pb-px pl-1 pr-px pt-0.5">
              <Designer />
            </div>
          </div>
        </main>
      </div>
      <Annotations />
    </div>
  );
}
